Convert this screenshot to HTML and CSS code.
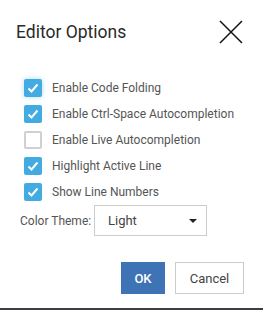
FILE: index.html
```html
<!DOCTYPE html>
<html lang="en">
<head>
    <meta charset="UTF-8">
    <title>Editor Options</title>
    <link rel="stylesheet" href="styles.css">
</head>
<body>
    <div class="dialog">
        <div class="header">
            <h2 class="title">Editor Options</h2>
            <svg class="close" width="24" height="24" viewBox="0 0 24 24">
                <path d="M1 1 L23 23 M23 1 L1 23" stroke="#111" stroke-width="1.5" fill="none"/>
            </svg>
        </div>

        <div class="options">
            <label class="option">
                <span class="box checked focus"><svg width="18" height="18" viewBox="0 0 18 18"><path d="M4.5 9.5 L7.5 12.5 L13.5 5.5" stroke="#fff" stroke-width="2" fill="none"/></svg></span>
                Enable Code Folding
            </label>
            <label class="option">
                <span class="box checked"><svg width="18" height="18" viewBox="0 0 18 18"><path d="M4.5 9.5 L7.5 12.5 L13.5 5.5" stroke="#fff" stroke-width="2" fill="none"/></svg></span>
                Enable Ctrl-Space Autocompletion
            </label>
            <label class="option">
                <span class="box"></span>
                Enable Live Autocompletion
            </label>
            <label class="option">
                <span class="box checked"><svg width="18" height="18" viewBox="0 0 18 18"><path d="M4.5 9.5 L7.5 12.5 L13.5 5.5" stroke="#fff" stroke-width="2" fill="none"/></svg></span>
                Highlight Active Line
            </label>
            <label class="option">
                <span class="box checked"><svg width="18" height="18" viewBox="0 0 18 18"><path d="M4.5 9.5 L7.5 12.5 L13.5 5.5" stroke="#fff" stroke-width="2" fill="none"/></svg></span>
                Show Line Numbers
            </label>
        </div>

        <div class="theme">
            <span class="theme-label">Color Theme:</span>
            <div class="select">
                <span>Light</span>
                <span class="caret"></span>
            </div>
        </div>

        <div class="footer">
            <button class="btn btn-ok">OK</button>
            <button class="btn btn-cancel">Cancel</button>
        </div>

        <div class="edge"></div>
    </div>
</body>
</html>
```

FILE: styles.css
```css
body { margin: 0; background: #fff; font-family: Roboto, "Liberation Sans", sans-serif; }
.dialog { width: 263px; height: 310px; overflow: hidden; }
.header { display: flex; align-items: center; justify-content: space-between; height: 24px; padding: 20px 20px 0 16px; }
.title { margin: 0; font-size: 17.5px; font-weight: 400; line-height: 20px; color: #2a2a2a; }
.close { display: block; }
.options { margin-top: 31px; padding-left: 24px; }
.option { display: flex; align-items: center; gap: 10px; height: 26px; font-size: 12px; color: #555; }
.box { width: 18px; height: 18px; box-sizing: border-box; border: 2px solid #d0d0d0; border-radius: 2px; background: #fff; }
.box.checked { border: none; background: #42abe2; }
.box svg { display: block; }
.box.focus { box-shadow: 0 0 5px rgba(66, 171, 226, 0.45); }
.theme { display: flex; align-items: center; padding-left: 20px; height: 31px; }
.theme-label { font-size: 12px; color: #555; width: 74px; }
.select { display: flex; align-items: center; justify-content: space-between; width: 113px; height: 31px; box-sizing: border-box; border: 1px solid #ccc; padding: 0 9px 0 13px; font-size: 13px; color: #444; }
.caret { width: 0; height: 0; border-left: 4px solid transparent; border-right: 4px solid transparent; border-top: 4px solid #222; }
.footer { display: flex; justify-content: flex-end; gap: 10px; margin-top: 26px; padding-right: 19px; }
.btn { height: 32px; font-family: Roboto, "Liberation Sans", sans-serif; font-size: 13px; cursor: pointer; }
.btn-ok { width: 44px; background: #3e73b6; color: #fff; border: none; font-weight: 500; }
.btn-cancel { width: 69px; background: #fff; color: #444; border: 1px solid #ccc; }
.edge { margin-top: 14px; height: 2px; background: #3a3f45; }
```
